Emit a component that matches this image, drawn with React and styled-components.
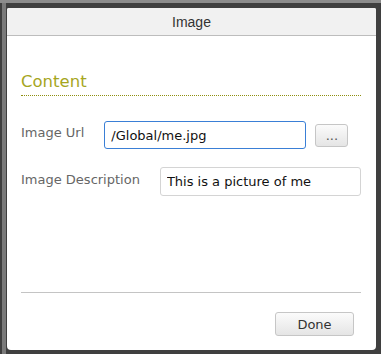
import styled, { createGlobalStyle } from 'styled-components'

const Global = createGlobalStyle`
    html, body {
        margin: 0;
        padding: 0;
        background: #3f3f3f;
    }
    * { box-sizing: border-box; }
`

function App() {
    return (
        <>
            <Global />
            <Backdrop>
                <Dialog>
                    <Header>Image</Header>
                    <Body>
                        <SectionTitle>Content</SectionTitle>
                        <Row gap={18}>
                            <Label>Image Url</Label>
                            <Input focused defaultValue="/Global/me.jpg" />
                            <BrowseButton>...</BrowseButton>
                        </Row>
                        <Row gap={18}>
                            <Label>Image Description</Label>
                            <Input defaultValue="This is a picture of me" />
                        </Row>
                        <Footer>
                            <Button>Done</Button>
                        </Footer>
                    </Body>
                </Dialog>
            </Backdrop>
        </>
    )
}

export default App

const Backdrop = styled.div`
    width: 381px;
    height: 354px;
    padding: 5px 5px 4px 7px;
    background: #3f3f3f;
    border-top: 3px solid #8c8c8c;
    box-shadow: inset 2px 0 0 #3f3f3f, inset 6px 0 0 #7a7a7a;
`

const Dialog = styled.div`
    width: 369px;
    height: 342px;
    background: #fff;
    border-radius: 2px 2px 4px 4px;
    display: flex;
    flex-direction: column;
    overflow: hidden;
`

const Header = styled.div`
    height: 28px;
    flex-shrink: 0;
    background: #f1f1f1;
    border-bottom: 1px solid #bdbdbd;
    display: flex;
    align-items: center;
    justify-content: center;
    font-family: "Liberation Sans", Arial, sans-serif;
    font-size: 14px;
    color: #333;
`

const Body = styled.div`
    flex: 1;
    display: flex;
    flex-direction: column;
    padding: 0 15px 14px 14px;
    font-family: "DejaVu Sans", Verdana, sans-serif;
`

const SectionTitle = styled.div`
    margin-top: 35px;
    height: 25px;
    line-height: 22px;
    font-size: 16.5px;
    color: #a6a61e;
    border-bottom: 1px dotted #8f8f10;
    margin-bottom: 25px;
`

const Row = styled.div`
    display: flex;
    align-items: center;
    margin-bottom: ${p => p.gap}px;
`

const Label = styled.label`
    flex-shrink: 0;
    white-space: nowrap;
    font-size: 13px;
    color: #666;
    margin-right: 20px;
    margin-top: -5px;
`

const Input = styled.input`
    flex-shrink: 1;
    min-width: 0;
    width: 202px;
    height: ${p => (p.focused ? 28 : 29)}px;
    padding: 0 6px;
    border: 1px solid ${p => (p.focused ? '#3a7fd6' : '#d4d4d4')};
    border-radius: 3px;
    font-family: "DejaVu Sans", Verdana, sans-serif;
    font-size: 13px;
    color: #111;
    background: #fff;
    outline: none;
`

const Button = styled.button`
    width: 79px;
    height: 24px;
    border: 1px solid #c6c6c6;
    border-radius: 3px;
    background: linear-gradient(#fbfbfb, #e5e5e5);
    font-family: "DejaVu Sans", Verdana, sans-serif;
    font-size: 13px;
    color: #333;
    padding: 0;
`

const BrowseButton = styled(Button)`
    flex-shrink: 0;
    width: 33px;
    height: 23px;
    margin-left: 9px;
    color: #555;
`

const Footer = styled.div`
    margin-top: auto;
    border-top: 1px solid #c4c4c4;
    padding: 19px 7px 0 0;
    display: flex;
    justify-content: flex-end;
`
